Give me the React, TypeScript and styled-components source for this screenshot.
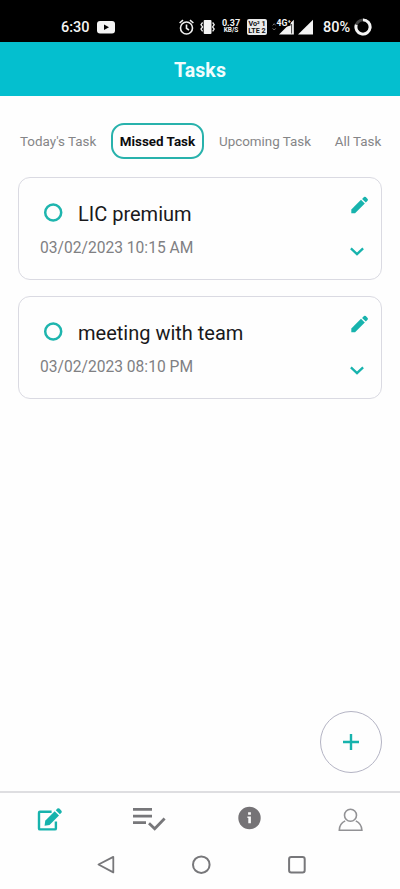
import React from 'react';
import styled, { createGlobalStyle } from 'styled-components';

const teal = '#17b3ad';
const grey = '#77777a';

const GlobalStyle = createGlobalStyle`
  *, *::before, *::after { box-sizing: border-box; }
  body { margin: 0; background: #fefefe; font-family: Roboto, "Liberation Sans", sans-serif; }
  button { font-family: inherit; background: none; border: 0; padding: 0; }
  svg { display: block; flex: none; }
`;

const Screen = styled.div`
  display: flex;
  flex-direction: column;
  width: 400px;
  height: 889px;
  overflow: hidden;
  background: #fefefe;
`;

const StatusBar = styled.div`
  display: flex;
  align-items: center;
  flex: none;
  height: 42px;
  padding: 12px 28px 0 61px;
  background: #000;
  color: #f4f4f4;
`;

const StatusText = styled.span<{ $width: number }>`
  flex: none;
  width: ${(p) => p.$width}px;
  padding-top: 2px;
  font-size: 14.5px;
  font-weight: 500;
  line-height: 18px;
  white-space: nowrap;
`;

const StatusIcons = styled.div`
  display: flex;
  align-items: center;
  margin-left: auto;
`;

const TinyStack = styled.div<{ $boxed?: boolean; $width: number }>`
  display: flex;
  flex-direction: column;
  align-items: center;
  justify-content: center;
  width: ${(p) => p.$width}px;
  height: 16px;
  border-radius: 2px;
  background: ${(p) => (p.$boxed ? '#e9e9e9' : 'transparent')};
  color: ${(p) => (p.$boxed ? '#111' : '#f4f4f4')};
  font-weight: 700;
  white-space: nowrap;
`;

const TinyLine = styled.span<{ $size: number }>`
  font-size: ${(p) => p.$size}px;
  line-height: 7.5px;
`;

const Gap = styled.span<{ $width: number }>`
  flex: none;
  width: ${(p) => p.$width}px;
`;

const Header = styled.header`
  display: flex;
  align-items: center;
  justify-content: center;
  flex: none;
  height: 54px;
  padding-top: 4px;
  background: #04bfcf;
`;

const Title = styled.h1`
  margin: 0;
  color: #f1fdfd;
  font-size: 19.5px;
  font-weight: 700;
  line-height: 24px;
  letter-spacing: 0.1px;
`;

const Tabs = styled.nav`
  display: flex;
  align-items: center;
  flex: none;
  height: 36px;
  margin-top: 27px;
  padding-left: 20px;
`;

const Tab = styled.button<{ $width: number; $active?: boolean }>`
  flex: none;
  width: ${(p) => p.$width}px;
  height: 36px;
  padding-top: ${(p) => (p.$active ? '1px' : '0')};
  border: ${(p) => (p.$active ? '2px solid #28b2ac' : '0')};
  border-radius: 13px;
  color: ${(p) => (p.$active ? '#0c0c0e' : '#858587')};
  font-size: 13.4px;
  font-weight: ${(p) => (p.$active ? 700 : 400)};
  white-space: nowrap;
`;

const TaskList = styled.main`
  display: flex;
  flex-direction: column;
  flex: 1;
  gap: 16px;
  padding: 18px 18px 0;
`;

const Card = styled.article`
  display: flex;
  justify-content: space-between;
  height: 103px;
  padding: 18px 12px 0 21px;
  border: 1px solid #dadae2;
  border-radius: 12px;
`;

const CardBody = styled.div`
  display: flex;
  flex-direction: column;
`;

const TaskRow = styled.div`
  display: flex;
  align-items: center;
  gap: 15px;
  height: 35px;
  padding-left: 3px;
`;

const TaskName = styled.span`
  color: #19191b;
  font-size: 20px;
  line-height: 24px;
`;

const TaskDate = styled.time`
  margin-top: 7px;
  color: #808083;
  font-size: 15.6px;
  line-height: 20px;
`;

const CardActions = styled.div`
  display: flex;
  flex-direction: column;
  align-items: flex-end;
`;

const ExpandButton = styled.button`
  margin: 33px 5px 0 0;
`;

const AddRow = styled.div`
  display: flex;
  justify-content: flex-end;
  flex: none;
  padding: 0 18px 18px 0;
`;

const AddButton = styled.button`
  display: flex;
  align-items: center;
  justify-content: center;
  width: 62px;
  height: 62px;
  border: 1px solid #b4b4c4;
  border-radius: 50%;
`;

const BottomNav = styled.nav`
  display: grid;
  grid-template-columns: repeat(4, 1fr);
  flex: none;
  height: 49px;
  border-top: 2px solid #dedee1;
`;

const NavItem = styled.button<{ $shift?: number }>`
  display: flex;
  justify-content: center;
  padding-top: 13px;
  padding-right: ${(p) => p.$shift ?? 0}px;
`;

const SystemNav = styled.div`
  display: flex;
  align-items: center;
  flex: none;
  gap: 76px;
  height: 49px;
  padding-left: 96px;
`;

const YoutubeIcon = () => (
  <svg width="18" height="13" viewBox="0 0 18 13">
    <rect width="18" height="12.5" rx="3" fill="#f4f4f4" />
    <path d="M7 3.6 12 6.3 7 9Z" fill="#000" />
  </svg>
);

const AlarmIcon = () => (
  <svg width="15" height="16" viewBox="0 0 15 16" fill="none" stroke="#f0f0f0" strokeWidth="1.6">
    <circle cx="7.5" cy="9" r="6" />
    <path d="M.6 4 4 1.2M14.4 4 11 1.2M7.5 5.5V9.3L10 11" />
  </svg>
);

const VibrateIcon = () => (
  <svg width="15" height="14" viewBox="0 0 15 14">
    <rect x="3.7" width="7.8" height="14" rx="1" fill="#f4f4f4" />
    <path d="M2.6 2.5 1 4.7l1.6 2.2L1 9.1l1.6 2.2M12.6 2.5l1.6 2.2-1.6 2.2 1.6 2.2-1.6 2.2" fill="none" stroke="#eee" strokeWidth="1.3" />
  </svg>
);

const SignalIcons = () => (
  <svg width="43" height="16" viewBox="0 0 43 16">
    <path d="M1.7 6.4 3.2 4.7 4.7 6.4M1.7 9.4 3.2 11 4.7 9.4" fill="none" stroke="#777" />
    <path d="M8 15.5 22.8 .8V15.5Z" fill="#f4f4f4" />
    <path d="M20.6 5V14.5" stroke="#444" strokeWidth="1" />
    <path d="M5.5 0H19.6V6.6L14.5 8H5.5Z" fill="#000" />
    <text x="5.6" y="6.9" fontSize="8.6" fontWeight="700" fill="#f4f4f4" fontFamily="Roboto, sans-serif">4G⁺</text>
    <path d="M27 15.5 42 .8V15.5Z" fill="#f4f4f4" />
  </svg>
);

const BatteryIcon = () => (
  <svg width="18" height="18" viewBox="0 0 18 18" fill="none" strokeWidth="2.9">
    <circle cx="9" cy="9" r="7.1" stroke="#454545" />
    <path d="M9 1.9A7.1 7.1 0 1 1 2.3 6.7" stroke="#f4f4f4" />
  </svg>
);

const CircleIcon = () => (
  <svg width="20" height="23" viewBox="0 0 20 23" fill="none" stroke="#1eb5ae" strokeWidth="2.5">
    <circle cx="10.2" cy="10.5" r="8" />
  </svg>
);

const PencilIcon = () => (
  <svg width="18" height="18" viewBox="0 0 18 18" fill={teal}>
    <path d="M.3 13.5 10 3.8 13.8 7.6 4.1 17.2 .3 17.2Z" />
    <path d="M11.1 3 13 1.1Q13.9.3 14.8 1.1L16.6 3Q17.4 3.9 16.6 4.7L14.8 6.6Z" />
  </svg>
);

const ChevronIcon = () => (
  <svg width="14" height="9" viewBox="0 0 14 9" fill="none" stroke={teal} strokeWidth="2.3">
    <path d="M.9 1.4 7 7.2 13.1 1.4" />
  </svg>
);

const PlusIcon = () => (
  <svg width="16" height="16" viewBox="0 0 16 16" stroke={teal} strokeWidth="2.4">
    <path d="M8 0V16M0 8H16" />
  </svg>
);

const ComposeIcon = () => (
  <svg width="26" height="26" viewBox="0 0 26 26" fill="none">
    <path d="M14.6 5.7H3Q2 5.7 2 6.7V22.4Q2 23.4 3 23.4H17.9Q18.9 23.4 18.9 22.4V15.5" stroke={teal} strokeWidth="2.4" />
    <path d="M8.2 14.7 17.7 5.2 22 9.5 12.5 19 7.6 19.7Z" fill={teal} />
    <path d="M18.8 4.2 20.4 2.6Q21.4 1.7 22.4 2.6L24.4 4.7Q25.3 5.7 24.4 6.7L22.9 8.3Z" fill={teal} />
  </svg>
);

const ChecklistIcon = () => (
  <svg width="34" height="26" viewBox="0 0 34 26" fill="none" stroke={grey} strokeWidth="2.8">
    <path d="M1 3.4H20M1 10.2H20M1 16.6H14M17 17.3 22.7 22.8 32.6 12.5" />
  </svg>
);

const InfoIcon = () => (
  <svg width="23" height="26" viewBox="0 0 23 26">
    <circle cx="11.5" cy="12" r="11.2" fill="#757376" />
    <path d="M10.1 6.3H12.9V8.8H10.1ZM9.4 10.5H12.9V17.2H10.3V12H9.4Z" fill="#fafafa" />
  </svg>
);

const PersonIcon = () => (
  <svg width="25" height="26" viewBox="0 0 25 26" fill="none" stroke="#929295" strokeWidth="1.6">
    <circle cx="12.5" cy="9.2" r="6" />
    <path d="M7.2 14.9Q1.3 17.7 1.3 24.2H23.9Q23.7 17.9 17.8 14.9" />
  </svg>
);

const BackIcon = () => (
  <svg width="19" height="20" viewBox="0 0 19 20" fill="none" stroke={grey} strokeWidth="1.8" strokeLinejoin="round">
    <path d="M2.5 9.5 17.3 1.9V17.4Z" />
  </svg>
);

const HomeIcon = () => (
  <svg width="20" height="20" viewBox="0 0 20 20" fill="none" stroke={grey} strokeWidth="2">
    <circle cx="10.3" cy="9.7" r="8.3" />
  </svg>
);

const RecentsIcon = () => (
  <svg width="20" height="20" viewBox="0 0 20 20" fill="none" stroke={grey} strokeWidth="2">
    <rect x="2.1" y="1.9" width="15.6" height="15.6" rx="2.2" />
  </svg>
);

const tabs = [
  { label: "Today's Task", width: 76, gap: 15 },
  { label: 'Missed Task', width: 93, gap: 15, active: true },
  { label: 'Upcoming Task', width: 92, gap: 23 },
  { label: 'All Task', width: 48, gap: 0 },
];

const tasks = [
  { name: 'LIC premium', date: '03/02/2023 10:15 AM' },
  { name: 'meeting with team', date: '03/02/2023 08:10 PM' },
];

export default function App() {
  return (
    <>
      <GlobalStyle />
      <Screen>
        <StatusBar>
          <StatusText $width={36}>6:30</StatusText>
          <YoutubeIcon />
          <StatusIcons>
            <AlarmIcon />
            <Gap $width={6} />
            <VibrateIcon />
            <Gap $width={6} />
            <TinyStack $width={20}>
              <TinyLine $size={9}>0.37</TinyLine>
              <TinyLine $size={6.5}>KB/S</TinyLine>
            </TinyStack>
            <Gap $width={6} />
            <TinyStack $width={20} $boxed>
              <TinyLine $size={7.2}>Vo² 1</TinyLine>
              <TinyLine $size={7.2}>LTE 2</TinyLine>
            </TinyStack>
            <Gap $width={4} />
            <SignalIcons />
            <Gap $width={9} />
            <StatusText $width={31}>80%</StatusText>
            <BatteryIcon />
          </StatusIcons>
        </StatusBar>
        <Header>
          <Title>Tasks</Title>
        </Header>
        <Tabs>
          {tabs.map((t) => (
            <React.Fragment key={t.label}>
              <Tab $width={t.width} $active={t.active}>{t.label}</Tab>
              <Gap $width={t.gap} />
            </React.Fragment>
          ))}
        </Tabs>
        <TaskList>
          {tasks.map((t) => (
            <Card key={t.name}>
              <CardBody>
                <TaskRow>
                  <CircleIcon />
                  <TaskName>{t.name}</TaskName>
                </TaskRow>
                <TaskDate>{t.date}</TaskDate>
              </CardBody>
              <CardActions>
                <button aria-label="Edit"><PencilIcon /></button>
                <ExpandButton aria-label="Expand"><ChevronIcon /></ExpandButton>
              </CardActions>
            </Card>
          ))}
        </TaskList>
        <AddRow>
          <AddButton aria-label="Add task"><PlusIcon /></AddButton>
        </AddRow>
        <BottomNav>
          <NavItem aria-label="Tasks"><ComposeIcon /></NavItem>
          <NavItem $shift={2} aria-label="Checklist"><ChecklistIcon /></NavItem>
          <NavItem $shift={2} aria-label="Info"><InfoIcon /></NavItem>
          <NavItem aria-label="Profile"><PersonIcon /></NavItem>
        </BottomNav>
        <SystemNav>
          <BackIcon />
          <HomeIcon />
          <RecentsIcon />
        </SystemNav>
      </Screen>
    </>
  );
}
